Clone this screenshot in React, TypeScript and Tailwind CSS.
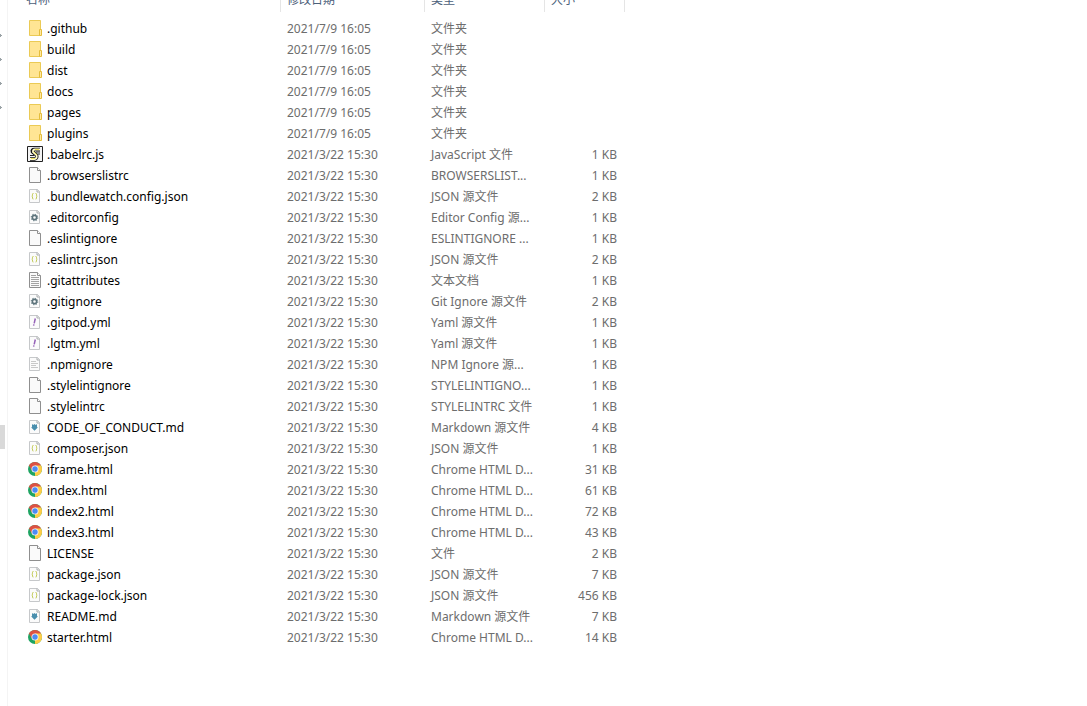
import React from "react";

type Kind =
  | "folder" | "script" | "blank" | "json" | "gear" | "text"
  | "yaml" | "lines" | "markdown" | "chrome";

type Entry = { name: string; date: string; type: string; size: string; icon: Kind };

const D1 = "2021/7/9 16:05";
const D2 = "2021/3/22 15:30";

const folder = (name: string): Entry => ({ name, date: D1, type: "文件夹", size: "", icon: "folder" });
const file = (name: string, icon: Kind, type: string, size: string): Entry => ({ name, date: D2, type, size, icon });

const entries: Entry[] = [
  folder(".github"),
  folder("build"),
  folder("dist"),
  folder("docs"),
  folder("pages"),
  folder("plugins"),
  file(".babelrc.js", "script", "JavaScript 文件", "1 KB"),
  file(".browserslistrc", "blank", "BROWSERSLIST...", "1 KB"),
  file(".bundlewatch.config.json", "json", "JSON 源文件", "2 KB"),
  file(".editorconfig", "gear", "Editor Config 源...", "1 KB"),
  file(".eslintignore", "blank", "ESLINTIGNORE ...", "1 KB"),
  file(".eslintrc.json", "json", "JSON 源文件", "2 KB"),
  file(".gitattributes", "text", "文本文档", "1 KB"),
  file(".gitignore", "gear", "Git Ignore 源文件", "2 KB"),
  file(".gitpod.yml", "yaml", "Yaml 源文件", "1 KB"),
  file(".lgtm.yml", "yaml", "Yaml 源文件", "1 KB"),
  file(".npmignore", "lines", "NPM Ignore 源...", "1 KB"),
  file(".stylelintignore", "blank", "STYLELINTIGNO...", "1 KB"),
  file(".stylelintrc", "blank", "STYLELINTRC 文件", "1 KB"),
  file("CODE_OF_CONDUCT.md", "markdown", "Markdown 源文件", "4 KB"),
  file("composer.json", "json", "JSON 源文件", "1 KB"),
  file("iframe.html", "chrome", "Chrome HTML D...", "31 KB"),
  file("index.html", "chrome", "Chrome HTML D...", "61 KB"),
  file("index2.html", "chrome", "Chrome HTML D...", "72 KB"),
  file("index3.html", "chrome", "Chrome HTML D...", "43 KB"),
  file("LICENSE", "blank", "文件", "2 KB"),
  file("package.json", "json", "JSON 源文件", "7 KB"),
  file("package-lock.json", "json", "JSON 源文件", "456 KB"),
  file("README.md", "markdown", "Markdown 源文件", "7 KB"),
  file("starter.html", "chrome", "Chrome HTML D...", "14 KB"),
];

/* Large page with a dark outline, used for unregistered and plain text files. */
function Page() {
  return (
    <>
      <path d="M2.5.5h8l3 3v12h-11z" fill="#fafafa" stroke="#8f8f8f" />
      <path d="M10.5.5v3h3" fill="#fff" stroke="#8f8f8f" />
    </>
  );
}

/* Smaller, paler page used for editor-associated files. */
function PalePage() {
  return (
    <>
      <path d="M2.5 1.5h8l2 2v11h-10z" fill="#fbfbfb" stroke="#c6c8ca" />
      <path d="M10 1.5v2.5h2.5" fill="none" stroke="#a9acae" />
    </>
  );
}

function Glyph({ kind }: { kind: Kind }) {
  switch (kind) {
    case "folder":
      return (
        <>
          <path d="M2.5.5h11.500v15H2.500z" fill="#ffe594" />
          <path d="M2.5 15.500V.500h11v9M2.500 15.500h11" fill="none" stroke="#ebca55" />
          <path d="M12.500 9.500h2v6h-2z" fill="#ffe9a3" stroke="#e5bd3c" />
        </>
      );
    case "script":
      return (
        <>
          <path d="M.5.5h15v15H.5z" fill="#f4f4f4" stroke="#222" />
          <path d="M13 3.500H7.500Q4.500 3.500 5.500 6L9.500 9q1 3.500-2 4H3" fill="none" stroke="#111" strokeWidth="3.500" />
          <path d="M13 3.500H8Q5.500 3.500 6 6l3.500 3q1 3.500-2 4H3" fill="none" stroke="#fffbd0" strokeWidth="1.800" />
          <path d="M6.500 5.500l3.500 3.500M8 3.500h4M4 12.500h4" stroke="#ece25c" />
          <path d="M9 6h4M11 8h2M3 9.500h4" stroke="#222" />
        </>
      );
    case "blank":
      return <Page />;
    case "text":
      return (
        <>
          <Page />
          <path d="M4 3.500h5M4 5.500h8M4 7.500h8M4 9.500h8M4 11.500h8M4 13.500h8" stroke="#a3a3a3" />
        </>
      );
    case "json":
      return (
        <>
          <PalePage />
          <path d="M6.500 5.500h-.5q-.5 0-.5.7v1.500l-.7.5.7.5v1.600q0 .7.5.7h.5M8.500 5.500H9q.5 0 .5.7v1.500l.7.5-.7.5v1.600q0 .7-.5.7h-.5" fill="none" stroke="#c3cb58" />
        </>
      );
    case "gear":
      return (
        <>
          <PalePage />
          <circle cx="7.500" cy="8.500" r="3.200" fill="none" stroke="#7f9298" strokeWidth="1.300" strokeDasharray="1.250 1.260" />
          <circle cx="7.500" cy="8.500" r="2.100" fill="none" stroke="#5c737b" strokeWidth="1.600" />
        </>
      );
    case "yaml":
      return (
        <>
          <PalePage />
          <path d="M8.300 4.500L7.200 9.300" stroke="#9560b8" strokeWidth="1.500" />
          <path d="M6.900 10.300l-.3 1.400" stroke="#9560b8" strokeWidth="1.500" />
        </>
      );
    case "lines":
      return (
        <>
          <PalePage />
          <path d="M4 5.500h5M4 7.500h7M4 9.500h5M4 11.500h7" stroke="#c8c8c8" />
        </>
      );
    case "markdown":
      return (
        <>
          <PalePage />
          <path d="M5 5l1.200 1L7.500 5l1.300 1L10 5v3.200h1L7.500 11.800 4 8.200h1z" fill="#4a8fae" />
        </>
      );
    case "chrome":
      return (
        <>
          <circle cx="8" cy="8" r="7" fill="#1da462" />
          <path d="M8 8L1.940 4.500A7 7 0 0 1 14.060 4.500z" fill="#dd5144" />
          <path d="M8 8V4.500h6.060A7 7 0 0 1 8 15z" fill="#ffcd46" />
          <path d="M1.940 4.500L5.200 10.200 8 8V4.500z" fill="#dd5144" />
          <path d="M8 15l3.200-5.500L8 8z" fill="#ffcd46" />
          <circle cx="8" cy="8" r="3.500" fill="#f5f5f5" />
          <circle cx="8" cy="8" r="2.700" fill="#4c8bf5" />
        </>
      );
  }
}

function Icon({ kind }: { kind: Kind }) {
  return (
    <svg className="size-4 shrink-0" viewBox="0 0 16 16" aria-hidden="true">
      <Glyph kind={kind} />
    </svg>
  );
}

function NavEdge() {
  return (
    <aside className="flex w-2 shrink-0 flex-col border-r border-[#f4f4f4]">
      <div className="flex flex-col gap-[21px] pt-[34px]">
        {[0, 1, 2, 3].map((i) => (
          <svg key={i} className="h-[3px] w-0.5" viewBox="0 0 2 3" aria-hidden="true">
            <path d="M0 0h1v1h1v1H1v1H0z" fill="#9aa2a6" />
          </svg>
        ))}
      </div>
      <div className="mt-[316px] h-6 w-[5px] bg-[#d9d9d9]" />
    </aside>
  );
}

const headers = [
  { label: "名称", cell: "w-[273px]", pad: "pl-[18px]" },
  { label: "修改日期", cell: "w-36", pad: "pl-1.5" },
  { label: "类型", cell: "w-[120px]", pad: "pl-1.5" },
  { label: "大小", cell: "w-20", pad: "pl-1.5" },
];

export default function App() {
  return (
    <div className="flex min-h-screen overflow-hidden bg-white font-['Noto_Sans','Noto_Sans_CJK_SC',sans-serif] text-xs text-[#6d6d6d]">
      <NavEdge />
      <main className="min-w-0 flex-1">
        <table className="table-fixed border-collapse">
          <thead>
            <tr>
              {headers.map((h) => (
                <th key={h.label} scope="col" className={`${h.cell} p-0 font-normal text-[#4c607a]`}>
                  <div className={`${h.pad} flex h-3 items-end border-r border-[#e5e5e5] pb-1 leading-4`}>{h.label}</div>
                </th>
              ))}
            </tr>
            <tr aria-hidden="true">
              <td colSpan={4} className="h-1.5 p-0" />
            </tr>
          </thead>
          <tbody>
            {entries.map((e) => (
              <tr key={e.name} className="h-[21px] whitespace-nowrap leading-[21px]">
                <td className="p-0 pl-[19px]">
                  <div className="flex items-start gap-1 text-black">
                    <span className="flex pt-0.5">
                      <Icon kind={e.icon} />
                    </span>
                    <span>{e.name}</span>
                  </div>
                </td>
                <td className="p-0 pl-1.5">{e.date}</td>
                <td className="p-0 pl-1.5">{e.type}</td>
                <td className="p-0 pr-2 text-right">{e.size}</td>
              </tr>
            ))}
          </tbody>
        </table>
      </main>
    </div>
  );
}
